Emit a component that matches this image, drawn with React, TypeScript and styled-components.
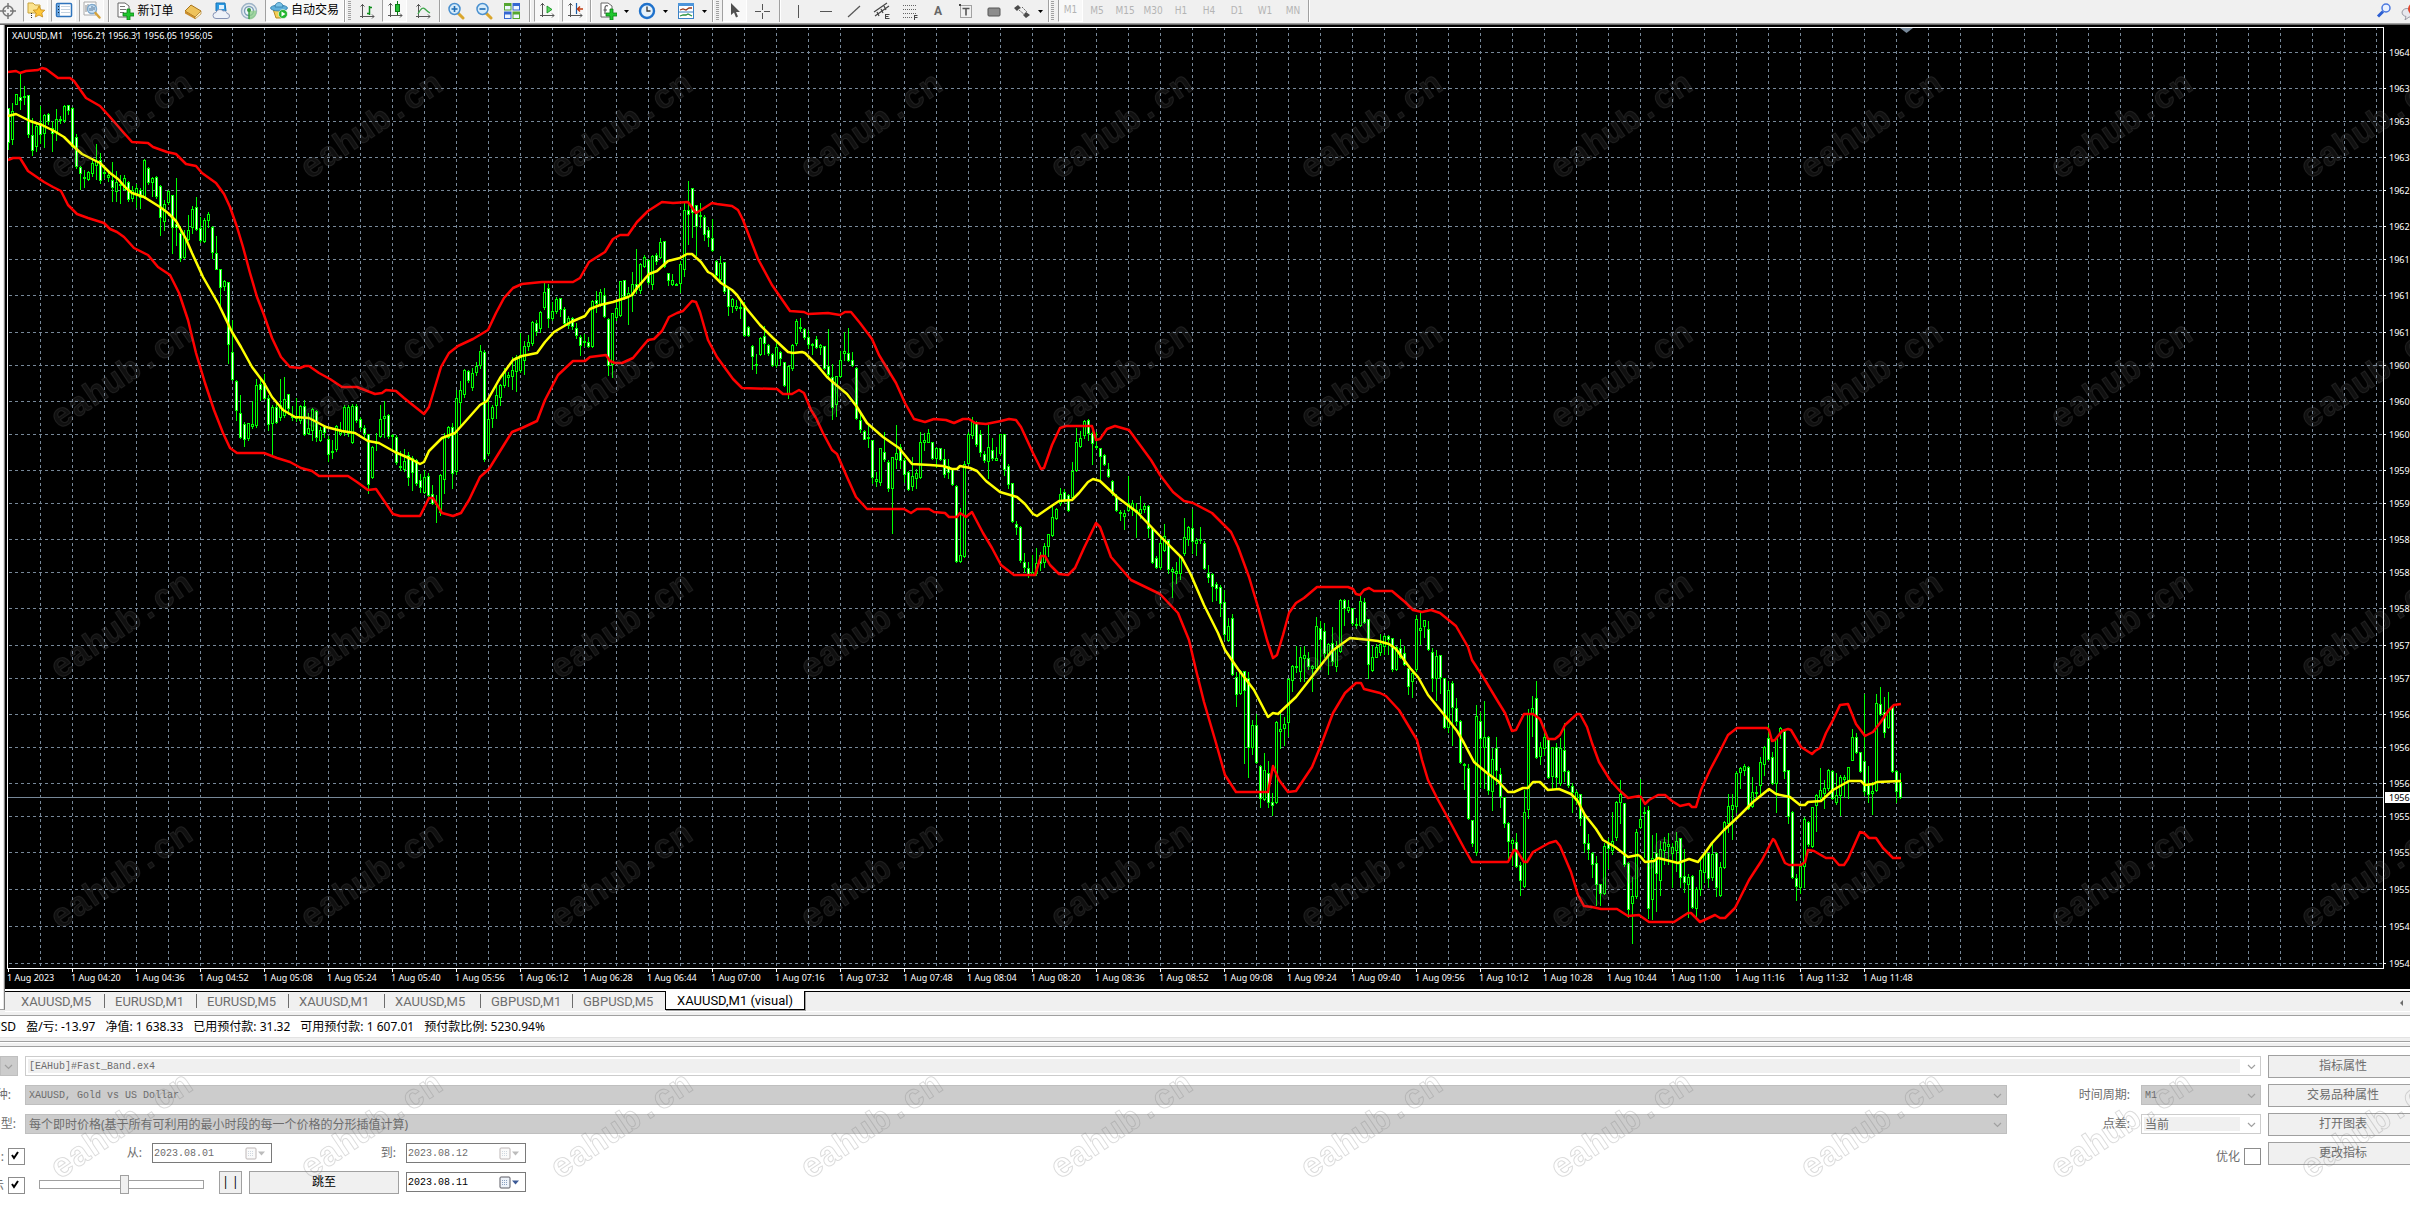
import React, { useState } from 'react';
import styled, { createGlobalStyle, css } from 'styled-components';

const UI = `"Noto Sans", "Noto Sans CJK SC", sans-serif`;
const MONO = `"Liberation Mono", "Noto Sans CJK SC", monospace`;

const GlobalStyle = createGlobalStyle`
  * { box-sizing: border-box; }
  body { margin: 0; background: #fff; font-family: ${UI}; font-size: 12px; overflow: hidden; }
  button, input, select { font-family: inherit; font-size: inherit; margin: 0; }
`;

/* ---------- toolbar ---------- */

const Toolbar = styled.header`
  display: flex;
  align-items: stretch;
  height: 25px;
  background: #f0f0f0;
  border-bottom: 1px solid #696969;
  box-shadow: inset 0 -1px 0 #a0a0a0;
`;

const ToolButton = styled.button<{ $w?: number; $on?: boolean; $muted?: boolean; $clip?: boolean }>`
  display: flex;
  align-items: center;
  justify-content: ${(p) => (p.$clip ? 'flex-start' : 'center')};
  gap: 3px;
  flex: none;
  width: ${(p) => p.$w ?? 28}px;
  height: 23px;
  padding: 0 0 1px;
  border: 0;
  background: none;
  color: ${(p) => (p.$muted ? '#b4b4b4' : '#000')};
  font-size: 12px;
  line-height: 16px;
  white-space: nowrap;
  ${(p) => p.$clip && 'overflow: hidden;'}
  ${(p) =>
    p.$on &&
    css`
      height: 22px;
      background: #f8f8f8;
      border-left: 1px solid #a0a0a0;
      border-right: 1px solid #fff;
      border-bottom: 1px solid #fff;
    `}
`;

const Period = styled(ToolButton)`
  font-family: "DejaVu Sans Condensed", "Noto Sans", sans-serif;
  font-size: 10px;
`;

const Gap = styled.span<{ $w: number }>`
  flex: none;
  width: ${(p) => p.$w}px;
`;

const Divider = styled.span`
  flex: none;
  width: 2px;
  height: 22px;
  background: #a0a0a0;
  border-right: 1px solid #fff;
`;

const Grip = styled.span`
  flex: none;
  width: 3px;
  height: 20px;
  margin-top: 1px;
  background: repeating-linear-gradient(#a0a0a0 0 1px, #f0f0f0 1px 2px);
`;

const Spacer = styled.span`
  flex: 1;
`;

const IconSvg = styled.svg`
  flex: none;
`;

const Svg = ({ children, size = 18 }: { children: React.ReactNode; size?: number }) => (
  <IconSvg width={size} height={size} viewBox={`0 0 ${size} ${size}`} aria-hidden="true">
    {children}
  </IconSvg>
);

const Caret = () => (
  <svg width="5" height="3" viewBox="0 0 5 3" aria-hidden="true">
    <path d="M0 0h5L2.500 3z" fill="#000" />
  </svg>
);

const axes = <path d="M4.500 2v14M2.500 4.500l2-2 2 2M2 14.500h14M14 12.500l2 2-2 2" fill="none" stroke="#555" />;

const Icons = {
  target: (
    <Svg size={16}>
      <circle cx="8" cy="8" r="5" fill="none" stroke="#777" strokeWidth="1.500" />
      <path d="M8 0v6M8 10v6M0 8h6M10 8h6" stroke="#777" strokeWidth="1.500" />
    </Svg>
  ),
  folderStar: (
    <Svg>
      <path d="M1 2h5l2 2h5v8H1z" fill="#fbe38e" stroke="#c9a43c" />
      <path d="M4.500 12v5" stroke="#333" strokeDasharray="1 1" />
      <path d="M12 5l1.800 3.800 4 .4-3 2.800.9 4-3.700-2-3.700 2 .9-4-3-2.800 4-.4z" fill="#ffc83a" stroke="#c58a16" strokeWidth=".8" />
    </Svg>
  ),
  window: (
    <Svg>
      <rect x="1.500" y="2.500" width="15" height="13" rx="1" fill="#fff" stroke="#2f74bd" strokeWidth="1.500" />
      <rect x="2" y="3" width="3" height="12" fill="#6ba4dc" />
      <path d="M6 5.500h9M6 8.500h9M6 11.500h9" stroke="#c5d3e0" />
      <path d="M3 5.500h1M3 8.500h1M3 11.500h1" stroke="#123" />
    </Svg>
  ),
  tester: (
    <Svg>
      <path d="M1 1h12v13H1z" fill="#fdfdfd" stroke="#aaa" />
      <path d="M3 4v7M5 3v6M11 3v7" stroke="#888" />
      <circle cx="9" cy="8" r="4.500" fill="#c8e1f6" fillOpacity=".9" stroke="#7ea9cd" strokeWidth="1.400" />
      <path d="M7 7v3M9 5v5M11 6v3" stroke="#56789a" />
      <path d="M12.500 12l4 4.500" stroke="#d5a23a" strokeWidth="2.400" strokeLinecap="round" />
    </Svg>
  ),
  order: (
    <Svg>
      <path d="M2 1h7l4 3v11H2z" fill="#fff" stroke="#666" />
      <path d="M4 4.500h5M4 7.500h6M4 10.500h4" stroke="#777" />
      <path d="M11 7h3v4h4v3h-4v4h-3v-4H7v-3h4z" fill="#1fc72e" stroke="#0a8214" strokeWidth=".8" />
    </Svg>
  ),
  book: (
    <Svg>
      <path d="M1 9l6-6 10 6-6 6z" fill="#eec35c" stroke="#a8741a" />
      <path d="M1 9l10 6v2L1 11.500z" fill="#c98d2b" />
      <path d="M17 9l-6 6v2l6-5z" fill="#fff3c8" stroke="#a8741a" strokeWidth=".6" />
    </Svg>
  ),
  cloud: (
    <Svg>
      <path d="M4 1h9l1 8H4z" fill="#2a9be4" stroke="#1673b5" />
      <path d="M7 3h5v4H7z" fill="#dff1fd" />
      <path d="M4 16.500a3 3 0 010-6 4 4 0 017-1.500 3 3 0 014 2.500 2.500 2.500 0 010 5z" fill="#eef2f9" stroke="#8794b5" />
    </Svg>
  ),
  signal: (
    <Svg>
      <circle cx="9" cy="9" r="7.500" fill="#e4ebf0" stroke="#9db3c6" strokeWidth="1.400" />
      <circle cx="9" cy="9" r="4.500" fill="#eef6fb" stroke="#7f9fb8" strokeWidth="1.400" />
      <path d="M9 9v8.500c5 0 8-4 7.500-9" fill="#8ccf86" opacity=".75" />
      <circle cx="9" cy="8" r="2" fill="#3a9b46" />
      <path d="M9 9v8" stroke="#3a9b46" strokeWidth="1.400" />
    </Svg>
  ),
  robot: (
    <Svg>
      <path d="M3 8h12l-4 9H6z" fill="#f4ce55" stroke="#b68b20" />
      <ellipse cx="9" cy="7" rx="8.500" ry="3" fill="#5fb0dc" stroke="#2c7ba8" strokeWidth=".8" />
      <path d="M5 6c0-6 8-6 8 0z" fill="#7cc4e8" stroke="#2c7ba8" strokeWidth=".8" />
      <circle cx="13" cy="13" r="4.500" fill="#22b52e" stroke="#fff" strokeWidth=".6" />
      <path d="M11.500 10.500v5l4-2.500z" fill="#fff" />
    </Svg>
  ),
  bars: (
    <Svg>
      {axes}
      <path d="M11.500 4v9M9 11.500h2M12 5.500h2" stroke="#0c8c1a" strokeWidth="1.500" />
    </Svg>
  ),
  candles: (
    <Svg>
      {axes}
      <path d="M11.500 0v14" stroke="#0a7a16" />
      <rect x="9.500" y="3.500" width="4" height="7" fill="#25c236" stroke="#0a7a16" />
    </Svg>
  ),
  line: (
    <Svg>
      {axes}
      <path d="M4 12c3-6 5-7 7-5s3 3 5 4" fill="none" stroke="#3ba648" strokeWidth="1.300" />
    </Svg>
  ),
  zoomIn: (
    <Svg>
      <path d="M11 11l5 5" stroke="#d9a62e" strokeWidth="3" strokeLinecap="round" />
      <circle cx="7.500" cy="7" r="5.500" fill="#d7ecfa" stroke="#4a90cf" strokeWidth="1.500" />
      <path d="M4.500 7h6M7.500 4v6" stroke="#1d6cb5" strokeWidth="1.600" />
    </Svg>
  ),
  zoomOut: (
    <Svg>
      <path d="M11 11l5 5" stroke="#d9a62e" strokeWidth="3" strokeLinecap="round" />
      <circle cx="7.500" cy="7" r="5.500" fill="#d7ecfa" stroke="#4a90cf" strokeWidth="1.500" />
      <path d="M4.500 7h6" stroke="#1d6cb5" strokeWidth="1.600" />
    </Svg>
  ),
  tiles: (
    <Svg>
      <rect x="1" y="1" width="7.500" height="7.500" fill="#55a630" />
      <rect x="9.500" y="1" width="7.500" height="7.500" fill="#3567d1" />
      <rect x="1" y="9.500" width="7.500" height="7.500" fill="#3567d1" />
      <rect x="9.500" y="9.500" width="7.500" height="7.500" fill="#55a630" />
      <path d="M2 4h5.500v3.500H2zM10.500 4H16v3.500h-5.500zM2 12.500h5.500V16H2zM10.500 12.500H16V16h-5.500z" fill="#eef6ff" />
    </Svg>
  ),
  scroll: (
    <Svg>
      {axes}
      <path d="M9 5l5 3.500L9 12z" fill="#5ddb62" stroke="#0c8c1a" strokeWidth=".8" />
    </Svg>
  ),
  shift: (
    <Svg>
      {axes}
      <path d="M10.500 2v11" stroke="#1a5ea8" strokeWidth="1.200" />
      <path d="M17 8h-5M14 5.500L11.500 8l2.500 2.500" fill="none" stroke="#c23c12" strokeWidth="1.500" />
    </Svg>
  ),
  indicator: (
    <Svg>
      <path d="M2 1h7l4 3v11H2z" fill="#fff" stroke="#666" />
      <path d="M9 4c-2-1-3 0-3 2v6M4.500 8H8" fill="none" stroke="#555" strokeWidth="1.200" />
      <path d="M11 7h3v4h4v3h-4v4h-3v-4H7v-3h4z" fill="#1fc72e" stroke="#0a8214" strokeWidth=".8" />
    </Svg>
  ),
  clock: (
    <Svg>
      <circle cx="9" cy="9" r="7" fill="#e6f2fb" stroke="#1f72cc" strokeWidth="2.400" />
      <path d="M9 4.500V9h3.500" fill="none" stroke="#333" strokeWidth="1.300" />
    </Svg>
  ),
  template: (
    <Svg>
      <rect x="1.500" y="1.500" width="15" height="15" fill="#fff" stroke="#3b82c6" />
      <rect x="1" y="1" width="16" height="3" fill="#4d95da" />
      <path d="M3 8l3-1 3 1 3-2 3 0" fill="none" stroke="#9a3a1c" strokeWidth="1.300" />
      <path d="M2 10h14" stroke="#3b82c6" />
      <path d="M3 14l3-1 3 0 2-1 4 2" fill="none" stroke="#2e9440" strokeWidth="1.300" />
    </Svg>
  ),
  cursor: (
    <Svg>
      <path d="M5 2v12l3-2.500 2 5 2-1-2-4.500h4z" fill="#505050" />
    </Svg>
  ),
  cross: (
    <Svg>
      <path d="M9.500 2v6M9.500 11v6M2 9.500h6M11 9.500h6" stroke="#555" />
    </Svg>
  ),
  vline: (
    <Svg>
      <path d="M9.500 3v13" stroke="#555" />
    </Svg>
  ),
  hline: (
    <Svg>
      <path d="M3 9.500h12" stroke="#555" />
    </Svg>
  ),
  trend: (
    <Svg>
      <path d="M3 15L15 4" stroke="#555" strokeWidth="1.200" />
    </Svg>
  ),
  channel: (
    <Svg>
      <path d="M1 10L14 1M2 14L16 4M4 10l2 4M8 7l2 4M11 4l2 4" stroke="#444" strokeWidth="1.200" />
      <path d="M12.500 12v5M12.500 12.500h4M12.500 14.500h3M12.500 16.500h4" stroke="#444" />
    </Svg>
  ),
  fibo: (
    <Svg>
      <path d="M2 3.500h14M2 7.500h14M2 11.500h14M2 15.500h9" stroke="#666" strokeDasharray="1 1" />
      <path d="M13.500 13v5M13.500 13.500h3M13.500 15.500h3" stroke="#444" />
    </Svg>
  ),
  label: (
    <Svg>
      <rect x="3.500" y="3.500" width="11" height="12" fill="none" stroke="#555" strokeDasharray="1 1" />
      <path d="M5.500 6.500h7M9 6.500v7" stroke="#555" strokeWidth="1.600" />
      <path d="M2 2h2v2H2z" fill="#444" />
    </Svg>
  ),
  rect: (
    <Svg>
      <rect x="3" y="6" width="12" height="8" rx="1" fill="#8c8c8c" stroke="#555" />
    </Svg>
  ),
  arrows: (
    <Svg>
      <path d="M5 3l3 3-2 1-2 2-3-3zM13 10l4 3-4 3-3-3z" fill="#4a4a4a" />
      <path d="M6 8l6 5M9 5l5 5" stroke="#666" strokeDasharray="2 1" />
    </Svg>
  ),
  search: (
    <Svg>
      <circle cx="11" cy="6" r="4" fill="#e9f1ff" stroke="#4a78e0" strokeWidth="1.500" />
      <path d="M8 9.500l-5 5" stroke="#2c5fd3" strokeWidth="3" />
    </Svg>
  ),
  chat: (
    <Svg>
      <path d="M9 7a5 5 0 00-7 3c0 3 2 4 4 4.500L5 18l4-3h9V7z" fill="#e8e8ee" stroke="#9a9aa4" />
      <circle cx="14" cy="7" r="6" fill="#e2462c" />
    </Svg>
  ),
};

const periods = ['M1', 'M5', 'M15', 'M30', 'H1', 'H4', 'D1', 'W1', 'MN'];

const TextTool = styled.span`
  font: bold 12px/16px Roboto, sans-serif;
  color: #666;
`;

function MainToolbar() {
  return (
    <Toolbar>
      <ToolButton $w={15} aria-label="准星">{Icons.target}</ToolButton>
      <Gap $w={8} />
      <ToolButton $w={25} $on aria-label="收藏夹">{Icons.folderStar}</ToolButton>
      <Gap $w={3} />
      <ToolButton $w={25} $on aria-label="终端">{Icons.window}</ToolButton>
      <Gap $w={3} />
      <ToolButton $w={25} $on aria-label="策略测试">{Icons.tester}</ToolButton>
      <Gap $w={4} />
      <Divider />
      <Gap $w={5} />
      <ToolButton $w={60}>{Icons.order}新订单</ToolButton>
      <Gap $w={4} />
      <ToolButton aria-label="MetaEditor">{Icons.book}</ToolButton>
      <ToolButton aria-label="云">{Icons.cloud}</ToolButton>
      <ToolButton aria-label="信号">{Icons.signal}</ToolButton>
      <Gap $w={2} />
      <ToolButton $w={79} $on>{Icons.robot}自动交易</ToolButton>
      <Divider />
      <Gap $w={2} />
      <Grip />
      <Gap $w={2} />
      <ToolButton aria-label="柱状图">{Icons.bars}</ToolButton>
      <Gap $w={1} />
      <ToolButton $w={25} $on aria-label="蜡烛图">{Icons.candles}</ToolButton>
      <Gap $w={2} />
      <ToolButton aria-label="折线图">{Icons.line}</ToolButton>
      <Gap $w={2} />
      <Divider />
      <Gap $w={1} />
      <ToolButton aria-label="放大">{Icons.zoomIn}</ToolButton>
      <ToolButton aria-label="缩小">{Icons.zoomOut}</ToolButton>
      <ToolButton aria-label="平铺">{Icons.tiles}</ToolButton>
      <Gap $w={3} />
      <Divider />
      <Gap $w={3} />
      <ToolButton $w={25} $on aria-label="自动滚动">{Icons.scroll}</ToolButton>
      <Gap $w={3} />
      <ToolButton $w={25} $on aria-label="图表平移">{Icons.shift}</ToolButton>
      <Gap $w={3} />
      <Divider />
      <Gap $w={4} />
      <ToolButton $w={35} aria-label="指标">{Icons.indicator}<Gap $w={1} /><Caret /></ToolButton>
      <Gap $w={4} />
      <ToolButton $w={35} aria-label="周期">{Icons.clock}<Gap $w={1} /><Caret /></ToolButton>
      <Gap $w={4} />
      <ToolButton $w={35} aria-label="模板">{Icons.template}<Gap $w={1} /><Caret /></ToolButton>
      <Gap $w={3} />
      <Divider />
      <Gap $w={2} />
      <Grip />
      <Gap $w={3} />
      <ToolButton $w={25} $on aria-label="光标">{Icons.cursor}</ToolButton>
      <Gap $w={1} />
      <ToolButton aria-label="十字线">{Icons.cross}</ToolButton>
      <Gap $w={3} />
      <Divider />
      <Gap $w={3} />
      <ToolButton aria-label="垂直线">{Icons.vline}</ToolButton>
      <ToolButton aria-label="水平线">{Icons.hline}</ToolButton>
      <ToolButton aria-label="趋势线">{Icons.trend}</ToolButton>
      <ToolButton aria-label="通道">{Icons.channel}</ToolButton>
      <ToolButton aria-label="斐波那契">{Icons.fibo}</ToolButton>
      <ToolButton aria-label="文本"><TextTool>A</TextTool></ToolButton>
      <ToolButton aria-label="标签">{Icons.label}</ToolButton>
      <ToolButton aria-label="矩形">{Icons.rect}</ToolButton>
      <Gap $w={2} />
      <ToolButton $w={35} aria-label="箭头">{Icons.arrows}<Gap $w={1} /><Caret /></ToolButton>
      <Gap $w={3} />
      <Divider />
      <Gap $w={1} />
      <Grip />
      <Gap $w={4} />
      {periods.map((p, i) => (
        <Period key={p} $w={i ? 28 : 25} $on={i === 0} $muted>{p}</Period>
      ))}
      <Gap $w={1} />
      <Divider />
      <Spacer />
      <ToolButton $w={24} aria-label="搜索">{Icons.search}</ToolButton>
      <Gap $w={4} />
      <ToolButton $w={10} $clip aria-label="消息">{Icons.chat}</ToolButton>
    </Toolbar>
  );
}

/* ---------- chart data: high, body top, body bottom, low, direction ---------- */

const BARS = `108 108 142 149 d,103 111 139 144 u,94 94 104 104 u,74 97 100 109 d,86 96 97 104 u,95 95 134 137 d,118 135 150 155 d,122 126 146 151 u,106 123 134 143 d,114 115 133 147 u,
113 114 121 124 d,121 128 133 151 d,109 119 132 140 u,116 119 120 123 u,105 106 120 122 u,105 105 110 114 d,107 108 146 147 d,134 137 166 168 d,166 167 173 189 d,170 177 178 187 u,
171 172 179 180 u,158 163 173 176 u,144 161 165 179 u,153 160 180 183 d,168 172 173 178 u,170 175 177 181 u,162 180 187 201 d,171 182 191 201 u,175 184 185 203 u,175 178 189 190 u,
181 182 199 201 d,186 190 198 201 u,184 188 193 207 u,188 190 197 208 d,159 160 197 198 u,167 168 182 184 d,177 178 182 196 u,176 177 196 198 d,185 186 217 235 d,200 204 221 230 u,
190 191 202 204 u,195 195 227 253 d,178 224 227 245 d,226 233 258 261 d,230 237 257 258 u,215 230 239 240 u,206 209 227 233 u,197 207 229 230 d,217 228 240 242 d,218 220 241 242 u,
212 214 220 227 u,226 227 252 258 d,236 253 269 269 d,269 269 287 305 d,280 281 286 290 u,282 282 344 363 d,320 352 379 380 d,380 381 410 420 d,395 413 437 438 d,422 424 439 446 d,
423 423 438 440 u,401 424 426 428 u,379 385 425 427 u,378 384 389 400 d,374 383 398 399 d,395 398 424 430 d,405 407 423 455 u,403 407 422 423 d,379 405 417 420 u,377 399 415 417 u,
394 394 408 414 d,406 416 417 420 u,398 416 418 421 u,405 406 420 423 u,400 406 434 435 d,413 428 433 434 u,408 409 430 440 u,410 411 437 441 d,427 430 440 441 u,425 426 432 437 d,
436 439 454 461 d,440 451 452 458 u,425 426 449 451 u,422 431 433 435 u,405 407 432 435 u,405 407 433 436 u,404 406 442 443 u,404 406 420 422 d,417 419 427 430 d,425 428 433 438 d,
434 434 484 493 d,446 447 477 478 u,433 442 443 450 u,405 419 436 437 u,401 416 418 437 u,414 415 436 438 d,434 435 436 451 u,435 437 462 464 d,451 466 467 470 u,449 461 469 471 u,
452 455 477 485 d,456 458 472 490 d,459 460 483 485 d,474 480 487 492 d,470 477 492 493 u,473 476 495 497 d,485 494 503 504 d,495 503 504 522 u,474 475 512 515 u,433 437 479 493 u,
426 427 437 438 u,423 427 473 488 d,390 398 471 474 u,381 390 402 425 u,369 370 394 397 u,370 371 380 382 d,368 373 387 390 u,362 366 372 375 u,345 351 365 368 u,350 352 459 461 d,
400 419 453 455 u,405 407 418 427 u,385 395 405 418 u,384 385 397 405 u,368 371 385 387 u,372 375 377 386 u,357 370 376 389 u,355 357 371 391 u,333 355 370 372 u,341 346 360 374 u,
335 342 346 350 u,321 322 343 345 u,320 323 331 335 d,311 312 328 332 u,283 292 307 309 u,284 288 318 327 d,302 311 318 320 u,297 299 311 313 u,298 298 309 316 d,307 309 323 324 d,
316 318 325 328 u,317 318 326 329 d,323 328 335 338 d,335 337 345 355 d,334 341 342 346 u,337 342 346 347 d,300 301 346 347 u,291 300 303 312 d,289 292 305 306 u,288 295 316 317 d,
318 319 365 375 d,313 313 364 377 u,301 308 317 320 u,281 281 315 316 u,280 280 296 299 d,287 293 296 324 u,272 284 295 311 u,249 284 289 293 d,263 264 290 293 u,255 257 266 267 u,
259 260 282 284 d,255 256 284 289 u,253 255 261 264 d,238 242 257 258 u,241 241 266 267 d,273 273 280 285 d,274 280 284 285 u,283 284 285 285 u,261 264 283 292 u,202 210 269 276 u,
181 210 214 244 d,188 188 212 237 d,205 205 226 255 d,203 215 216 227 u,215 217 234 240 d,227 230 237 246 d,219 238 250 251 d,260 261 275 278 d,256 263 279 282 u,262 262 291 293 d,
287 287 306 315 d,298 299 306 312 u,300 306 308 310 u,298 307 308 318 u,302 307 335 336 d,326 327 335 336 d,345 346 356 369 d,354 364 365 373 u,337 338 354 355 u,326 336 343 354 d,
344 345 353 355 d,353 354 365 366 d,341 347 365 367 u,351 352 358 365 d,362 362 385 386 d,365 366 393 398 u,344 345 368 370 u,319 321 343 345 u,318 327 328 331 u,328 329 337 339 d,
330 337 344 348 d,343 344 345 354 u,336 339 347 348 d,344 345 347 354 u,346 346 368 369 d,329 366 374 376 d,364 377 407 419 d,376 376 404 416 u,351 360 376 377 u,332 351 353 360 u,
328 353 360 361 d,352 360 365 366 d,367 368 418 419 d,413 420 429 432 d,430 431 439 439 d,425 437 438 447 u,440 440 477 483 d,472 479 481 486 u,448 448 482 485 u,432 452 459 461 d,
460 462 488 491 d,457 457 488 533 u,425 453 459 468 u,444 447 460 468 d,458 460 474 482 d,471 472 489 490 d,457 476 486 490 u,469 473 478 488 u,432 442 477 478 u,433 440 442 450 u,
429 433 442 442 u,442 442 458 459 d,447 448 458 467 u,448 448 459 460 d,449 459 474 477 d,459 466 472 478 d,468 468 484 485 d,485 486 561 562 d,508 555 561 562 u,461 464 556 557 u,
432 434 463 464 u,417 421 435 438 u,421 422 444 446 d,430 434 452 456 d,451 454 460 462 d,425 447 461 478 u,438 450 458 460 d,447 458 460 460 u,434 434 453 455 u,434 434 469 475 d,
464 466 484 488 d,483 483 521 522 d,521 524 527 534 d,526 527 560 562 d,553 562 567 572 d,562 568 575 577 d,555 572 574 575 u,548 563 573 575 u,552 555 563 570 d,543 546 562 567 u,
534 534 546 556 u,505 517 535 536 u,508 509 518 519 u,488 494 503 505 u,489 492 500 502 d,494 495 510 511 d,462 471 497 500 u,428 442 470 471 u,431 438 446 447 u,420 421 435 438 u,
419 420 433 440 d,431 433 443 464 d,432 446 447 448 u,448 448 456 480 d,454 455 464 465 d,463 469 476 477 d,480 481 493 495 d,494 497 510 511 d,510 512 513 520 u,510 513 516 529 u,
476 503 510 511 u,500 503 509 515 u,503 510 512 537 u,496 509 513 518 u,503 506 509 512 u,505 506 528 537 d,527 528 562 563 d,556 558 567 568 d,538 543 567 569 u,524 536 550 551 u,
540 540 569 573 d,567 569 571 597 u,562 571 573 583 u,555 556 573 579 u,518 537 553 555 u,526 527 539 545 u,509 528 541 553 d,538 540 543 555 u,527 539 540 543 u,541 543 568 569 d,
565 573 577 582 d,573 574 586 601 d,582 584 588 600 d,585 587 603 616 d,590 602 634 639 d,618 626 640 641 u,614 618 674 675 d,672 677 694 706 d,670 671 693 694 u,671 671 690 763 d,
672 678 747 777 d,720 725 747 754 u,714 725 762 763 d,765 766 798 807 d,753 770 799 800 u,761 773 802 807 d,793 802 805 815 d,721 722 802 803 u,711 729 731 748 u,717 724 728 745 u,
678 679 722 736 u,665 666 680 691 u,646 666 667 672 u,647 657 671 681 u,646 655 658 681 u,652 658 666 669 d,665 666 668 691 u,617 626 668 669 u,621 628 639 669 d,623 631 653 657 d,
643 644 655 674 u,627 643 661 665 d,641 648 666 671 u,599 600 651 652 u,599 600 608 625 d,600 607 610 612 u,608 608 623 625 d,618 624 625 628 u,595 601 625 626 u,598 602 622 623 d,
619 619 664 678 d,646 657 670 671 u,644 647 657 657 u,634 644 652 655 u,635 636 646 654 u,635 636 639 654 d,638 638 669 671 d,646 647 669 670 u,639 648 657 658 d,646 653 664 665 d,
668 668 686 694 d,669 673 681 697 u,615 619 669 671 u,612 628 630 644 u,620 620 626 637 u,621 629 649 650 d,648 652 678 691 d,650 656 678 700 u,655 655 677 693 d,678 678 727 728 d,
681 690 727 732 u,681 683 707 745 d,698 708 721 725 d,720 721 762 763 d,763 764 765 789 u,764 768 818 819 d,820 820 843 846 d,705 716 852 855 u,712 721 738 787 d,701 737 747 788 u,
736 737 790 794 d,748 759 791 810 u,737 748 770 784 d,768 774 796 807 d,797 797 823 827 d,822 823 841 858 d,838 840 843 865 u,833 842 866 867 d,862 865 880 895 d,790 812 886 887 u,
709 714 809 818 u,696 708 713 736 u,681 698 757 758 d,742 747 756 764 u,726 737 748 755 u,738 739 777 778 d,747 747 776 789 u,743 747 777 788 d,738 748 783 785 u,723 750 771 781 d,
770 771 785 787 d,783 786 792 812 d,790 792 800 804 u,794 794 818 825 d,813 814 843 852 d,834 843 849 859 d,852 853 864 877 d,856 863 884 905 d,884 884 893 905 d,843 846 893 894 u,
838 843 848 868 d,812 841 850 854 u,801 802 837 840 u,780 794 802 823 u,803 803 864 866 d,862 863 909 917 d,877 896 903 943 u,829 832 896 898 u,779 819 827 828 u,807 812 813 857 d,
806 810 908 918 d,835 858 899 919 u,833 853 873 911 d,841 849 880 895 u,837 842 850 864 u,833 844 846 864 u,843 847 853 887 u,832 841 850 871 u,838 838 877 887 d,849 876 882 892 d,
874 877 884 917 u,875 876 907 908 d,887 889 908 916 u,858 870 889 895 u,853 853 872 882 u,853 853 878 887 d,843 854 877 880 u,852 853 887 896 d,862 867 895 896 u,821 822 867 868 u,
794 806 823 832 u,794 805 809 839 u,771 773 806 812 u,767 768 772 788 u,764 766 770 775 u,766 767 808 809 d,777 792 806 807 u,786 792 793 798 u,757 762 785 795 u,746 747 764 775 u,
725 738 759 760 d,752 757 783 784 d,737 738 783 812 u,727 728 732 738 u,730 731 771 778 d,770 770 816 823 d,811 812 877 878 d,874 878 886 900 d,863 866 887 893 u,817 819 866 887 u,
821 822 844 846 d,807 807 846 847 u,794 795 805 831 u,768 790 797 800 u,780 788 793 808 u,769 770 788 790 u,770 771 798 799 d,773 795 802 804 u,775 777 795 815 u,775 777 779 797 u,
767 767 781 798 u,729 737 760 760 u,733 737 752 753 d,752 752 771 772 d,694 761 791 795 d,766 785 794 802 d,782 791 793 814 u,694 703 790 791 u,687 704 714 715 d,697 712 732 737 d,
692 710 727 728 u,705 706 771 772 d,770 771 791 802 d,773 782 797 798 d`;

const bars = BARS.split(',').map((row, i) => {
  const [h, t, b, l, dir] = row.trim().split(' ');
  return { x: 8 + i * 4, high: +h, top: +t, bottom: +b, low: +l, down: dir === 'd' };
});

const UPPER =
  '8,72 16,71 20,73 26,71 38,70 42,68 46,69 58,78 70,78 74,81 86,98 100,106 110,117 124,133 132,142 148,143 153,147 167,152 176,154 186,164 196,166 202,173 216,183 224,194 230,207 237,227 243,247 250,273 257,297 264,315 272,338 281,357 290,367 300,368 305,366 309,366 319,373 330,379 342,387 357,387 375,394 382,393 386,390 396,391 404,398 424,414 429,407 441,367 449,353 458,346 473,339 488,330 496,313 504,298 513,288 522,284 542,282 573,282 580,278 589,262 605,252 613,239 620,235 628,235 637,222 648,211 662,202 673,203 688,202 696,213 701,210 712,203 717,204 732,206 738,210 743,220 758,259 772,285 790,311 804,312 808,314 828,313 840,315 845,312 851,312 860,323 872,339 879,355 896,383 905,403 914,419 925,422 934,419 946,420 954,423 963,419 969,419 975,423 986,424 1001,421 1009,419 1016,420 1021,427 1033,453 1041,469 1044,468 1052,445 1060,428 1066,426 1092,426 1096,440 1100,439 1107,429 1115,426 1129,430 1140,445 1151,460 1160,475 1173,492 1184,501 1193,503 1212,513 1231,532 1238,547 1249,577 1258,607 1267,640 1273,658 1277,655 1283,635 1289,613 1296,603 1304,598 1317,587 1348,587 1353,589 1356,594 1360,595 1364,590 1369,588 1374,591 1392,591 1405,602 1413,610 1422,612 1431,610 1440,613 1456,626 1468,647 1472,660 1485,680 1497,700 1505,713 1512,731 1516,730 1524,714 1533,714 1540,719 1548,739 1555,739 1560,735 1565,725 1577,714 1580,714 1587,727 1592,743 1599,762 1610,780 1619,790 1628,798 1639,796 1641,797 1645,804 1649,800 1658,795 1665,795 1672,801 1680,806 1689,804 1692,807 1696,807 1701,790 1710,770 1719,753 1728,735 1737,728 1767,728 1769,730 1772,741 1775,740 1782,731 1788,729 1791,730 1801,747 1812,754 1815,751 1820,748 1826,733 1833,720 1840,705 1848,704 1856,724 1865,736 1873,732 1880,723 1889,710 1894,705 1901,704';
const MIDDLE =
  '8,116 16,114 20,116 30,121 42,125 54,131 64,137 72,145 82,154 100,163 110,173 118,179 126,188 132,193 144,197 160,207 168,213 176,221 186,239 192,253 203,277 219,305 232,332 241,347 252,367 264,383 272,397 283,410 295,417 309,418 326,427 342,431 355,433 368,441 379,443 395,452 411,459 420,464 424,462 429,451 442,438 455,433 464,423 480,405 487,401 500,378 513,360 522,356 537,353 545,342 554,332 571,322 585,316 590,309 600,305 613,302 628,297 632,295 637,288 649,274 657,271 668,261 680,258 687,254 692,254 701,262 708,272 712,274 721,283 732,290 737,295 746,308 760,325 773,338 788,352 793,353 802,352 805,353 817,365 827,377 835,384 847,394 857,407 867,423 883,437 899,448 912,464 930,465 943,466 952,469 957,469 960,466 970,468 977,471 986,481 1000,492 1017,497 1025,504 1033,514 1037,516 1050,507 1059,501 1072,500 1079,493 1088,482 1093,479 1100,481 1117,497 1137,512 1160,536 1182,558 1191,575 1204,605 1218,633 1225,650 1238,669 1254,690 1268,717 1273,713 1278,714 1296,697 1307,683 1321,665 1332,651 1350,638 1370,640 1378,641 1389,644 1396,649 1410,668 1418,677 1428,695 1446,717 1457,731 1464,743 1474,762 1487,773 1498,781 1508,792 1514,792 1523,788 1528,788 1533,782 1540,782 1548,790 1559,789 1571,794 1577,800 1585,815 1596,829 1603,840 1615,847 1628,857 1638,855 1640,856 1645,862 1654,861 1658,858 1678,863 1689,859 1698,862 1705,853 1712,843 1724,830 1739,816 1753,802 1769,789 1776,794 1790,797 1800,805 1805,805 1808,802 1821,801 1833,790 1849,781 1861,781 1865,785 1873,784 1877,782 1901,781';
const LOWER =
  '8,160 13,158 20,158 28,171 44,182 53,187 61,191 68,205 77,214 88,218 104,223 110,229 117,232 124,237 134,248 148,255 158,267 170,275 179,293 188,320 196,353 205,383 214,410 223,433 230,448 237,453 264,453 277,458 290,462 301,468 312,471 319,476 348,476 357,482 368,490 376,489 393,514 400,516 420,516 429,498 433,498 442,513 453,516 461,513 469,500 480,477 489,469 502,448 512,432 522,428 537,421 545,400 558,375 573,361 585,361 590,357 606,355 610,361 615,363 622,363 633,358 648,340 654,339 662,331 669,317 677,313 683,311 692,301 696,302 700,312 708,340 717,357 733,379 742,388 777,389 783,394 792,394 799,390 804,393 811,410 816,418 823,433 832,450 837,454 847,477 856,497 867,509 904,509 911,513 917,509 929,509 934,512 945,513 949,517 957,517 960,513 966,517 972,512 983,533 992,548 1001,565 1014,575 1035,575 1041,556 1045,556 1050,565 1059,574 1068,575 1075,568 1084,548 1096,523 1100,527 1111,557 1131,580 1160,594 1178,613 1189,640 1196,670 1204,702 1216,743 1225,775 1236,792 1268,792 1273,766 1279,780 1288,792 1296,791 1312,767 1321,745 1333,713 1345,693 1356,683 1361,683 1364,689 1380,693 1386,696 1399,710 1417,740 1422,760 1428,780 1437,798 1449,820 1464,848 1472,862 1508,862 1514,850 1517,851 1524,862 1527,862 1533,852 1549,843 1556,841 1560,846 1571,872 1578,895 1584,906 1592,907 1601,909 1617,909 1628,916 1639,915 1649,922 1674,922 1688,913 1691,913 1696,918 1700,922 1715,915 1720,918 1725,918 1735,908 1749,880 1762,860 1773,839 1775,841 1785,863 1789,865 1801,865 1805,862 1808,850 1814,851 1826,858 1833,858 1839,865 1844,865 1848,859 1860,832 1864,833 1869,838 1876,838 1883,848 1893,858 1901,858';

const prices: [number, string][] = [
  [52, '1964'], [88, '1963'], [121, '1963'], [157, '1963'], [190, '1962'], [226, '1962'], [259, '1961'],
  [295, '1961'], [332, '1961'], [365, '1960'], [401, '1960'], [434, '1960'], [470, '1959'], [503, '1959'],
  [539, '1958'], [572, '1958'], [608, '1958'], [645, '1957'], [678, '1957'], [714, '1956'], [747, '1956'],
  [783, '1956'], [816, '1955'], [852, '1955'], [889, '1955'], [926, '1954'], [963, '1954'],
];

const times = Array.from({ length: 30 }, (_, i) => {
  if (i === 0) return '1 Aug 2023';
  const m = 4 * 60 + 4 + i * 16;
  return `1 Aug ${String(Math.floor(m / 60)).padStart(2, '0')}:${String(m % 60).padStart(2, '0')}`;
});

const Workspace = styled.main`
  display: flex;
  background: #f0f0f0;
`;

const SideEdge = styled.aside`
  flex: none;
  width: 5px;
  margin-bottom: 2px;
  background: linear-gradient(90deg, #fff 0 3px, #e3e3e3 3px);
  border-right: 1px solid #828282;
  border-bottom: 1px solid #a0a0a0;
`;

const ChartColumn = styled.div`
  flex: 1;
  min-width: 0;
`;

const ChartFrame = styled.section`
  position: relative;
  display: flex;
  height: 964px;
  background: #000;
  overflow: hidden;
`;

const Plot = styled.svg`
  display: block;
  flex: 1;
  min-width: 0;
  height: 100%;
`;

const PriceAxis = styled.svg`
  display: block;
  flex: none;
  width: 27px;
  height: 100%;
`;

const ChartText = styled.text<{ $inverse?: boolean }>`
  font: 9px "Noto Sans", sans-serif;
  fill: ${(p) => (p.$inverse ? '#000' : '#fff')};
`;

const GRID = '#778899';

const Overlay = styled.svg`
  position: absolute;
  inset: 0;
  width: 100%;
  height: 100%;
  pointer-events: none;
`;

const WatermarkText = styled.text<{ $dark?: boolean }>`
  font: bold 34px "Liberation Mono", monospace;
  text-anchor: middle;
  fill: ${(p) => (p.$dark ? 'rgba(130, 130, 130, 0.12)' : 'none')};
  stroke: ${(p) => (p.$dark ? 'rgba(150, 150, 150, 0.14)' : 'rgba(110, 110, 110, 0.25)')};
`;

function Watermark({ id, top, dark }: { id: string; top: number; dark?: boolean }) {
  return (
    <Overlay aria-hidden="true">
      <defs>
        <pattern id={id} width="250" height="250" patternUnits="userSpaceOnUse" patternTransform={`translate(${dark ? -5 : 0} ${-top})`}>
          <WatermarkText transform="translate(122 127) rotate(-34)" y="9" $dark={dark}>
            eahub.cn
          </WatermarkText>
        </pattern>
      </defs>
      <rect width="100%" height="100%" fill={`url(#${id})`} />
    </Overlay>
  );
}

function Chart() {
  return (
    <ChartFrame>
      <Plot>
        <g transform="translate(-5 -25)">
          <g stroke={GRID} strokeDasharray="3 3" shapeRendering="crispEdges">
            {Array.from({ length: 110 }, (_, i) => (
              <line key={i} x1={40.5 + i * 32} x2={40.5 + i * 32} y1="27" y2="968" />
            ))}
            {prices.map(([y]) => (
              <line key={y} x1="9" x2="4000" y1={y + 0.5} y2={y + 0.5} />
            ))}
          </g>
          <path d="M8 797.500h4000" stroke={GRID} shapeRendering="crispEdges" />
          <path d="M1900 28h13l-6.500 5z" fill={GRID} />
          <g shapeRendering="crispEdges">
            {bars.map((b) => (
              <g key={b.x}>
                <rect x={b.x} y={b.high} width="1" height={b.low - b.high + 1} fill="#0f0" />
                <rect x={b.x - 1} y={b.top} width="3" height={b.bottom - b.top + 1} fill="#0f0" />
                {b.bottom - b.top > 1 && (
                  <rect x={b.x} y={b.top + 1} width="1" height={b.bottom - b.top - 1} fill={b.down ? '#fff' : '#000'} />
                )}
              </g>
            ))}
          </g>
          <g fill="none" strokeWidth="2.500" strokeLinejoin="round">
            <polyline points={UPPER} stroke="#f00" />
            <polyline points={LOWER} stroke="#f00" />
            <polyline points={MIDDLE} stroke="#ff0" />
          </g>
          <path d="M4000 27.500H7.500V968.500H4000" fill="none" stroke="#fff" shapeRendering="crispEdges" />
          <ChartText x="12" y="39">XAUUSD,M1&nbsp;&nbsp;&nbsp; 1956.21 1956.31 1956.05 1956.05</ChartText>
          {times.map((t, i) => (
            <g key={t}>
              <rect x={8 + i * 64} y="969" width="1" height="3" fill="#fff" />
              <ChartText x={7 + i * 64} y="981">{t}</ChartText>
            </g>
          ))}
        </g>
      </Plot>
      <PriceAxis>
        <g transform="translate(0 -25)">
          <path d="M.500 27V969" stroke="#fff" shapeRendering="crispEdges" />
          {prices.map(([y, label]) => (
            <g key={y}>
              <rect x="1" y={y} width="2" height="1" fill="#fff" />
              <ChartText x="6" y={y + 4}>{label}</ChartText>
            </g>
          ))}
          <rect x="2" y="792" width="25" height="11" fill="#fff" />
          <ChartText x="6" y="801" $inverse>1956</ChartText>
        </g>
      </PriceAxis>
      <Watermark id="wm-chart" top={25} dark />
    </ChartFrame>
  );
}

/* ---------- chart tabs and account summary ---------- */

const TabBar = styled.nav`
  display: flex;
  height: 21px;
  margin-top: 2px;
  border-top: 1px solid #000;
  border-bottom: 1px solid #fff;
  box-shadow: 0 -2px 0 #fff;
`;

const Tab = styled.button<{ $w: number; $active?: boolean; $edge?: boolean; $last?: boolean }>`
  position: relative;
  flex: none;
  width: ${(p) => p.$w}px;
  height: 19px;
  padding: 0 0 0 ${(p) => (p.$edge ? 16 : 10)}px;
  border: 0;
  background: none;
  color: #6d6d6d;
  font: 13px/19px Roboto, sans-serif;
  text-align: left;
  white-space: nowrap;
  ${(p) =>
    p.$active
      ? css`
          margin-top: -1px;
          padding-left: 11px;
          background: #fff;
          color: #000;
          border: solid #000;
          border-width: 0 1px 1px;
          box-shadow: 1px 1px 0 #a0a0a0;
        `
      : !p.$last &&
        css`
          &::after {
            content: '';
            position: absolute;
            right: 0;
            top: 2px;
            width: 1px;
            height: 14px;
            background: #6d6d6d;
          }
        `}
`;

const ScrollTabs = styled.button`
  margin-left: auto;
  width: 18px;
  padding: 0;
  border: 0;
  background: none;
`;

const Footer = styled.footer`
  padding-top: 3px;
  background: #f0f0f0;
`;

const Summary = styled.div`
  display: flex;
  gap: 10px;
  height: 23px;
  border-top: 1px solid #a0a0a0;
  border-bottom: 1px solid #e3e3e3;
  background: #fff;
  line-height: 21px;
  white-space: nowrap;

  > :first-child {
    margin-left: -8px;
  }
`;

const Splitter = styled.div`
  height: 9px;
  border-bottom: 1px solid #a0a0a0;
  background: linear-gradient(#f0f0f0 0 3px, #a0a0a0 3px 4px, #fff 4px 5px, #f0f0f0 5px);
`;

/* ---------- strategy tester ---------- */

const Tester = styled.form`
  position: relative;
  height: 167px;
  padding-top: 8px;
  background: #fff;
  color: #6d6d6d;
  overflow: hidden;
`;

const Rows = styled.div`
  display: flex;
  flex-direction: column;
  gap: 6px;
  margin-right: -8px;
`;

const Row = styled.div`
  display: flex;
  height: 23px;
  gap: 7px;
`;

const Action = styled.button<{ $w: number; $dark?: boolean }>`
  flex: none;
  width: ${(p) => p.$w}px;
  height: 23px;
  padding: 0 0 1px;
  border: 1px solid #a0a0a0;
  background: #f0f0f0;
  color: ${(p) => (p.$dark ? '#000' : '#6d6d6d')};
  font-size: 12px;
  line-height: 18px;
`;

const RowLabel = styled.label<{ $w: number; $end?: number; $tight?: boolean }>`
  flex: none;
  width: ${(p) => p.$w}px;
  padding-right: ${(p) => p.$end ?? 0}px;
  display: flex;
  justify-content: flex-end;
  font-size: 12px;
  line-height: 21px;
  white-space: nowrap;
  ${(p) =>
    p.$tight &&
    css`
      padding-top: 4px;
      margin-right: -3px;
    `}
`;

const SelectBox = styled.span<{ $w?: number }>`
  position: relative;
  display: flex;
  height: 20px;
  margin-top: 1px;
  ${(p) => (p.$w ? `flex: none; width: ${p.$w}px;` : 'flex: 1; min-width: 0;')}

  svg {
    position: absolute;
    right: 5px;
    top: 8px;
  }
`;

const StyledSelect = styled.select<{ $filled?: boolean; $mono?: boolean }>`
  appearance: none;
  width: 100%;
  height: 20px;
  padding: 0 0 0 3px;
  border: 1px solid ${(p) => (p.$filled ? '#bfbfbf' : '#ccc')};
  border-radius: 0;
  background: ${(p) =>
    p.$filled ? '#ccc' : '#fff linear-gradient(#f0f0f0, #f0f0f0) 2px 2px / calc(100% - 22px) 14px no-repeat'};
  color: #6d6d6d;
  opacity: 1;
  font: ${(p) => (p.$mono ? `10px ${MONO}` : `12px ${UI}`)};
`;

function Select({ id, value, w, filled, mono }: { id: string; value: string; w?: number; filled?: boolean; mono?: boolean }) {
  return (
    <SelectBox $w={w}>
      <StyledSelect id={id} $filled={filled} $mono={mono} disabled aria-label={value || '类型'}>
        <option>{value}</option>
      </StyledSelect>
      <svg width="9" height="6" viewBox="0 0 9 6" aria-hidden="true">
        <path d="M1 1l3.500 3.500L8 1" fill="none" stroke="#a0a0a0" strokeWidth="1.200" />
      </svg>
    </SelectBox>
  );
}

const Check = styled.input`
  appearance: none;
  flex: none;
  align-self: flex-end;
  width: 17px;
  height: 17px;
  border: 1px solid #8c8c8c;
  background: #fff;

  &:checked {
    background: #fff
      url("data:image/svg+xml,%3Csvg xmlns='http://www.w3.org/2000/svg' width='15' height='15'%3E%3Cpath d='M3 6l2 3 4-6' fill='none' stroke='black' stroke-width='2'/%3E%3C/svg%3E");
  }
`;

const DateBox = styled.span<{ $on?: boolean }>`
  display: flex;
  align-items: center;
  flex: none;
  width: 120px;
  height: 20px;
  margin-top: 1px;
  padding-right: 6px;
  border: 1px solid #7a7a7a;
  background: #fff;

  input {
    flex: 1;
    min-width: 0;
    height: 18px;
    padding: 0 0 0 1px;
    border: 0;
    background: none;
    color: ${(p) => (p.$on ? '#000' : '#6d6d6d')};
    font: 10px ${MONO};
  }
`;

function DateField({ id, initial, on }: { id: string; initial: string; on?: boolean }) {
  const [value, setValue] = useState(initial);
  const c = on ? '#5a5a62' : '#bdb6b6';
  return (
    <DateBox $on={on}>
      <input id={id} value={value} onChange={(e) => setValue(e.target.value)} disabled={!on} aria-label="日期" />
      <svg width="20" height="13" viewBox="0 0 20 13" aria-hidden="true">
        <rect x="1" y="1" width="10" height="11" rx="1" fill={on ? '#eef3fa' : '#fafafa'} stroke={c} />
        <path d="M3 4.500h6M3 6.500h6M3 8.500h6" stroke={on ? '#8aa0c0' : '#d0d8e0'} strokeDasharray="1 1" />
        <path d="M13 4.500h7l-3.500 4z" fill={on ? '#3c5a96' : '#bcbcbc'} />
      </svg>
    </DateBox>
  );
}

const Range = styled.input`
  appearance: none;
  flex: none;
  width: 165px;
  height: 20px;
  margin: 3px 0 0;
  background: none;

  &::-webkit-slider-runnable-track {
    height: 9px;
    border: 1px solid #a0a0a0;
    background: #fff;
  }
  &::-webkit-slider-thumb {
    appearance: none;
    width: 9px;
    height: 19px;
    margin-top: -6px;
    border: 1px solid #a0a0a0;
    background: #f0f0f0;
  }
`;

const Fill = styled.span`
  flex: 1;
`;

const tabs: [string, number][] = [
  ['XAUUSD,M5', 100], ['EURUSD,M1', 92], ['EURUSD,M5', 92], ['XAUUSD,M1', 96],
  ['XAUUSD,M5', 96], ['GBPUSD,M1', 92], ['GBPUSD,M5', 92],
];

const account = ['USD', '盈/亏: -13.97', '净值: 1 638.33', '已用预付款: 31.32', '可用预付款: 1 607.01', '预付款比例: 5230.94%'];

export default function App() {
  const [visual, setVisual] = useState(true);
  const [range, setRange] = useState(true);
  const [optimise, setOptimise] = useState(false);
  const [speed, setSpeed] = useState(52);
  return (
    <>
      <GlobalStyle />
      <MainToolbar />
      <Workspace>
        <SideEdge />
        <ChartColumn>
          <Chart />
          <TabBar>
            {tabs.map(([name, w], i) => (
              <Tab key={i} $w={w} $edge={i === 0} $last={i === tabs.length - 1}>{name}</Tab>
            ))}
            <Tab $w={140} $active>XAUUSD,M1 (visual)</Tab>
            <ScrollTabs aria-label="向左滚动">
              <svg width="3" height="6" viewBox="0 0 3 6"><path d="M3 0v6L0 3z" fill="#6d6d6d" /></svg>
            </ScrollTabs>
          </TabBar>
        </ChartColumn>
      </Workspace>
      <Footer>
        <Summary>
          {account.map((a) => (
            <span key={a}>{a}</span>
          ))}
        </Summary>
        <Splitter />
        <Tester onSubmit={(e) => e.preventDefault()}>
          <Rows>
            <Row>
              <Select id="kind" value="" w={18} filled />
              <Select id="expert" value="[EAHub]#Fast_Band.ex4" mono />
              <Action type="button" $w={150}>指标属性</Action>
            </Row>
            <Row>
              <RowLabel $w={18} $end={7} htmlFor="symbol">种:</RowLabel>
              <Select id="symbol" value="XAUUSD, Gold vs US Dollar" filled mono />
              <RowLabel $w={120} $end={4} htmlFor="period">时间周期:</RowLabel>
              <Select id="period" value="M1" w={120} filled mono />
              <Action type="button" $w={150}>交易品种属性</Action>
            </Row>
            <Row>
              <RowLabel $w={18} $end={2} htmlFor="model">型:</RowLabel>
              <Select id="model" value="每个即时价格(基于所有可利用的最小时段的每一个价格的分形插值计算)" filled />
              <RowLabel $w={120} $end={4} htmlFor="spread">点差:</RowLabel>
              <Select id="spread" value="当前" w={120} />
              <Action type="button" $w={150}>打开图表</Action>
            </Row>
            <Row>
              <RowLabel $w={4} $tight htmlFor="range">:</RowLabel>
              <Check id="range" type="checkbox" checked={range} onChange={(e) => setRange(e.target.checked)} />
              <RowLabel $w={113} $end={3} htmlFor="from">从:</RowLabel>
              <DateField id="from" initial="2023.08.01" />
              <RowLabel $w={120} $end={3} htmlFor="to">到:</RowLabel>
              <DateField id="to" initial="2023.08.12" />
              <Fill />
              <RowLabel $w={28} $tight htmlFor="opt">优化</RowLabel>
              <Check id="opt" type="checkbox" checked={optimise} onChange={(e) => setOptimise(e.target.checked)} />
              <Action type="button" $w={150}>更改指标</Action>
            </Row>
            <Row>
              <RowLabel $w={4} $tight htmlFor="visual">示</RowLabel>
              <Check id="visual" type="checkbox" checked={visual} onChange={(e) => setVisual(e.target.checked)} />
              <Gap $w={0} />
              <Range type="range" value={speed} onChange={(e) => setSpeed(+e.target.value)} aria-label="速度" />
              <Gap $w={1} />
              <Action type="button" $w={23} $dark>| |</Action>
              <Action type="button" $w={150} $dark>跳至</Action>
              <DateField id="goto" initial="2023.08.11" on />
            </Row>
          </Rows>
          <Watermark id="wm-tester" top={1047} />
        </Tester>
      </Footer>
    </>
  );
}
